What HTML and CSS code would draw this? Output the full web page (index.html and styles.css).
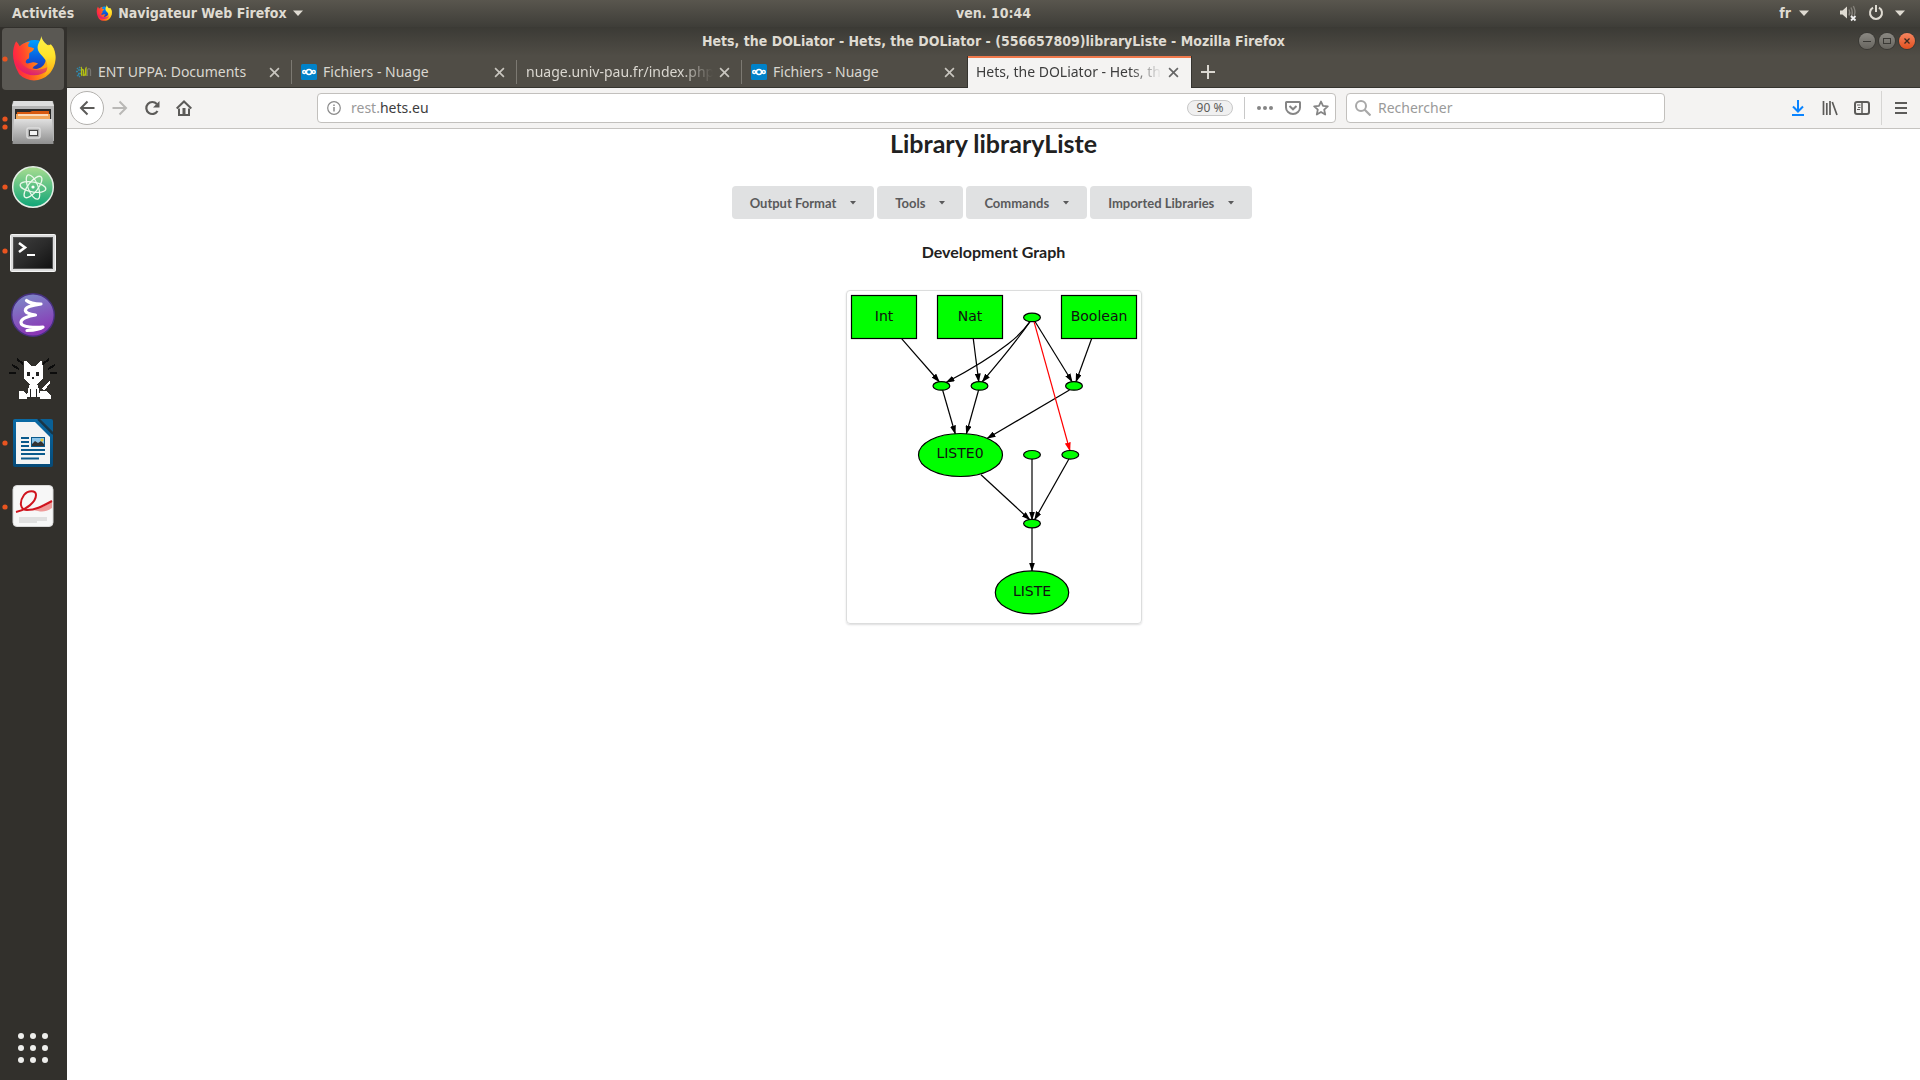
FILE: index.html
```html
<!DOCTYPE html>
<html lang="fr">
<head>
<meta charset="utf-8">
<title>Hets, the DOLiator - (556657809)libraryListe</title>
<link rel="stylesheet" href="styles.css">
</head>
<body>
<svg class="defs" width="0" height="0" aria-hidden="true">
  <defs>
    <linearGradient id="fx-body" x1="0" y1="0.6" x2="1" y2="0.4">
      <stop offset="0" stop-color="#ff1b4b"/><stop offset="0.3" stop-color="#ff4a2b"/><stop offset="0.65" stop-color="#ff9a0e"/><stop offset="1" stop-color="#ffcb1f"/>
    </linearGradient>
    <linearGradient id="fx-low" x1="0" y1="0" x2="0" y2="1">
      <stop offset="0.5" stop-color="#e0107a" stop-opacity="0"/><stop offset="1" stop-color="#d0108a" stop-opacity="0.8"/>
    </linearGradient>
    <linearGradient id="fx-tail" x1="0" y1="0" x2="0" y2="1">
      <stop offset="0" stop-color="#fff14a"/><stop offset="0.5" stop-color="#ffe32b"/><stop offset="1" stop-color="#ffa814"/>
    </linearGradient>
    <linearGradient id="fx-globe" x1="0" y1="0" x2="0" y2="1">
      <stop offset="0" stop-color="#00a0ff"/><stop offset="0.5" stop-color="#0a5bdc"/><stop offset="1" stop-color="#3a1d8a"/>
    </linearGradient>
    <linearGradient id="metal" x1="0" y1="0" x2="0" y2="1"><stop offset="0" stop-color="#e0e0e0"/><stop offset="1" stop-color="#8f8f8f"/></linearGradient>
    <linearGradient id="atom-bg" x1="0" y1="0" x2="0" y2="1"><stop offset="0" stop-color="#a9dd90"/><stop offset="1" stop-color="#0ea578"/></linearGradient>
    <linearGradient id="term-bg" x1="0" y1="0" x2="1" y2="1"><stop offset="0" stop-color="#3e3e3e"/><stop offset="0.5" stop-color="#2b2b2b"/><stop offset="1" stop-color="#111"/></linearGradient>
    <linearGradient id="emacs-bg" x1="0.3" y1="0" x2="0.6" y2="1"><stop offset="0" stop-color="#7d88c8"/><stop offset="1" stop-color="#8a31b4"/></linearGradient>
    <linearGradient id="writer-bg" x1="0" y1="0" x2="0" y2="1"><stop offset="0" stop-color="#0a6aa5"/><stop offset="1" stop-color="#064a78"/></linearGradient>
    <symbol id="firefox" viewBox="0 0 44 46">
      <circle cx="23" cy="23" r="18" fill="url(#fx-globe)"/>
      <path d="M5 6c1.500 1.500 2.500 3 3.500 5 3-3 6.500-4.500 10-4.500-1.500 2-2 3.500-1.500 5 1.500.5 3.500.5 5.500 1.500-.5 2.500-2 3.500-4.500 4.500-.5 2 0 3.500-.5 5.500-2 .5-3.500 2-3 4 1 1.500 3.500.5 6 0 2.500-.8 4.500.5 6 1-1.500 1.500-4 2-5.500 4.500 5 2 10.500-.5 12.500-6 2-6-.5-11-2.500-14 4-4 9-4 11 1 3.500 9 1 19-5 25-8 8-21 8-29 0C.5 26 .5 14 5 6z" fill="url(#fx-body)"/>
      <path d="M5 6c-4.500 8-4.500 20 3 27.500 8 8 21 8 29 0 2-2 3-4 4-6-9 9-27 10-33-4C6 19 6 12 5 6z" fill="url(#fx-low)"/>
      <path d="M29.500 1c0 4-3.500 7-3.500 11.500 0 6.500 8.500 9 9.500 16.500.5 4-1 8-4 11 9-4 13-13 11.500-21.500-.8-4-2-7-4-9.500l-2 1.500c-3.500-1.500-6.500-5.500-7.500-9.500z" fill="url(#fx-tail)"/>
    </symbol>
    <symbol id="cloud" viewBox="0 0 16 16">
      <rect width="16" height="16" rx="1.500" fill="#0082c9"/>
      <g fill="none" stroke="#fff" stroke-width="1.400"><circle cx="8" cy="8" r="2.500"/><circle cx="3.200" cy="8" r="1.500"/><circle cx="12.800" cy="8" r="1.500"/></g>
    </symbol>
    <symbol id="cross" viewBox="0 0 10 10"><path d="M1 1l8 8M9 1L1 9" fill="none" stroke="currentColor" stroke-width="1.500"/></symbol>
    <symbol id="caret" viewBox="0 0 10 6"><path d="M0 0.500h10L5 6z" fill="currentColor"/></symbol>
  </defs>
</svg>

<header class="panel">
  <div class="panel-left">
    <button class="panel-btn">Activités</button>
    <button class="panel-btn app-menu"><svg width="16" height="18"><use href="#firefox"/></svg>Navigateur Web Firefox<svg class="arrow" width="10" height="6"><use href="#caret"/></svg></button>
  </div>
  <button class="panel-btn clock">ven. 10:44</button>
  <div class="panel-right">
    <button class="panel-btn lang">fr<svg width="10" height="6"><use href="#caret"/></svg></button>
    <button class="panel-btn system" aria-label="Système">
      <svg width="18" height="18" viewBox="0 0 18 18"><path d="M1 6.500h2.500L8 2.500v12L3.500 10.500H1z" fill="currentColor"/><path d="M10 5.500q1.500 3 0 6M12 3.500q2.500 5 0 10M14.300 2q2.700 5 1 9" fill="none" stroke="#85827b" stroke-width="1.400"/><path d="M12 12l4.500 4.500m0-4.500L12 16.500" stroke="#eee" stroke-width="1.800"/></svg>
      <svg width="16" height="16" viewBox="0 0 16 16"><path d="M5 2.700a6 6 0 1 0 6 0M8 0v7" fill="none" stroke="currentColor" stroke-width="2"/></svg>
      <svg width="10" height="6"><use href="#caret"/></svg>
    </button>
  </div>
</header>

<div class="desktop">
  <nav class="dock" aria-label="Applications">
    <button class="dock-item active" aria-label="Firefox"><svg class="dock-icon" viewBox="0 0 62 62"><circle cx="3" cy="31" r="2.600" fill="#e95420"/><use href="#firefox" x="9" y="7" width="45" height="47"/></svg></button>
    <button class="dock-item" aria-label="Fichiers"><svg class="dock-icon" viewBox="0 0 62 62"><g fill="#e95420"><circle cx="3" cy="27" r="2.600"/><circle cx="3" cy="35" r="2.600"/></g>
      <path d="M11 9h40l1 5v35H10V14z" fill="#b5b5b5"/><path d="M12 9h38l2 5H10z" fill="#dedede"/><rect x="13" y="17" width="36" height="11" fill="#2a2a2a"/><path d="M15 20h13l2-1h17v8H15z" fill="#d8590f"/><path d="M14 22h34v5H14z" fill="#f2a65a"/><path d="M16 23h30" stroke="#fff" stroke-width="1.200"/><path d="M12 27h38l1.500 25h-41z" fill="url(#metal)"/><rect x="25" y="36" width="13" height="10" rx="1.500" fill="#aaa" stroke="#ddd" stroke-width="1.500"/><rect x="27.500" y="38.500" width="8" height="5" fill="#f3f3f3" stroke="#444"/></svg></button>
    <button class="dock-item" aria-label="Atom"><svg class="dock-icon" viewBox="0 0 62 62"><circle cx="3" cy="31" r="2.600" fill="#e95420"/><circle cx="31" cy="31" r="20.300" fill="url(#atom-bg)" stroke="#e4eee6" stroke-width="1.500"/><g fill="none" stroke="#eaf8ea" stroke-width="1.300"><ellipse cx="31" cy="31" rx="13" ry="5" transform="rotate(10 31 31)"/><ellipse cx="31" cy="31" rx="13" ry="5" transform="rotate(68 31 31)"/><ellipse cx="31" cy="31" rx="13" ry="5" transform="rotate(128 31 31)"/></g><circle cx="31" cy="31" r="1.600" fill="#fff"/></svg></button>
    <button class="dock-item" aria-label="Terminal"><svg class="dock-icon" viewBox="0 0 62 62"><circle cx="3" cy="31" r="2.600" fill="#e95420"/><rect x="8.500" y="14.500" width="45" height="37" rx="1" fill="#dcdcdc" stroke="#f4f4f4"/><rect x="11.500" y="17.500" width="39" height="31" fill="url(#term-bg)" stroke="#555"/><path d="M17 23l6 4.500-6 4.500" fill="none" stroke="#fff" stroke-width="2.600"/><path d="M25 35h8" stroke="#fff" stroke-width="2"/></svg></button>
    <button class="dock-item" aria-label="Emacs"><svg class="dock-icon" viewBox="0 0 62 62"><circle cx="31" cy="31" r="21.300" fill="url(#emacs-bg)" stroke="#46307f" stroke-width="1.400"/><path d="M25 46.500c6-.3 13-1 16-3.500-6 .5-22 1-22-4.500 0-4 8-6.500 14.500-7.500-6-.8-11-2.500-10-5.500 1-3.500 9-4.500 15.500-5.500-5 0-11-.3-14.500-3.500" fill="none" stroke="#fff" stroke-width="3.200" stroke-linecap="round" stroke-linejoin="round"/></svg></button>
    <button class="dock-item" aria-label="Chat"><svg class="dock-icon" viewBox="0 0 62 62" shape-rendering="crispEdges"><g stroke="#0c0c0c" stroke-width="2"><path d="M15 11l6 5M10 17l7 4M7 25h7M47 11l-6 5M53 17l-7 4M55 25h-7"/></g><g fill="#fff"><path d="M22 13h3l4 5h5l4-5h2l1 8v9l-4 4-2 2 2 5 1 8H25l1-8 2-5-3-2-3-4v-9z"/><path d="M17 43h5l3 4v4h-8zM38 43h6l5 4v4H38zM40 40l8-8v3l-6 8z"/></g><path d="M25 24h3v4h-3zM34 24h3v4h-3zM30 29h2v2h-2zM28 41h1v8h-1zM34 41h1v8h-1z" fill="#222"/></svg></button>
    <button class="dock-item" aria-label="LibreOffice Writer"><svg class="dock-icon" viewBox="0 0 62 62"><circle cx="3" cy="31" r="2.600" fill="#e95420"/><path d="M13 7h24l14 14v32a2 2 0 0 1-2 2H13a2 2 0 0 1-2-2V9a2 2 0 0 1 2-2z" fill="url(#writer-bg)"/><path d="M38 7h11a2 2 0 0 1 2 2v11z" fill="#0a6096"/><path d="M36 7l15 15" stroke="#173547" stroke-width="2"/><path d="M14 10h19l15 15v27H14z" fill="#f4f4f4"/><g stroke="#0a5a8c" stroke-width="2"><path d="M19 26h8M19 30h8M19 34h8M19 38h24M19 42h24M19 46.500h18"/></g><rect x="29.500" y="25.500" width="13" height="9" fill="#8cc4e8" stroke="#0a5a8c"/><path d="M30 34v-2l3-3 3 2 3-2 3 3v2z" fill="#333"/><circle cx="40" cy="28" r="1.500" fill="#e8c530"/></svg></button>
    <button class="dock-item" aria-label="Visionneur PDF"><svg class="dock-icon" viewBox="0 0 62 62"><circle cx="3" cy="31" r="2.600" fill="#e95420"/><rect x="11" y="9.500" width="40" height="41" rx="4" fill="#f7f7f7" stroke="#d8d8d8"/><path d="M24 33c8 1 18-1 26-8v7c-6 4-10 4-14 3-4-1-8-1-12-2z" fill="#ee9a98"/><path d="M14 36c10-2 20-10 20-17 0-5-8-5-12 0-5 7-4 15 3 15 8 0 14-3 25-9" fill="none" stroke="#d0141e" stroke-width="2"/><path d="M17 42h28M17 44h28M17 46h18" stroke="#c9c9c9" stroke-width="1"/></svg></button>
    <button class="dock-item apps" aria-label="Afficher les applications"><svg class="dock-icon" viewBox="0 0 62 62"><g fill="#eeeeec"><circle cx="19" cy="19" r="3"/><circle cx="31" cy="19" r="3"/><circle cx="43" cy="19" r="3"/><circle cx="19" cy="31" r="3"/><circle cx="31" cy="31" r="3"/><circle cx="43" cy="31" r="3"/><circle cx="19" cy="43" r="3"/><circle cx="31" cy="43" r="3"/><circle cx="43" cy="43" r="3"/></g></svg></button>
  </nav>

  <div class="window">
    <div class="titlebar">
      <span class="window-title">Hets, the DOLiator - Hets, the DOLiator - (556657809)libraryListe - Mozilla Firefox</span>
      <div class="window-controls">
        <button class="win-btn" aria-label="Réduire"><svg width="16" height="16"><path d="M4 8.500h8" stroke="#3a3935"/></svg></button>
        <button class="win-btn" aria-label="Agrandir"><svg width="16" height="16"><rect x="4.500" y="5.500" width="7" height="5" fill="none" stroke="#3a3935"/></svg></button>
        <button class="win-btn win-close" aria-label="Fermer"><svg width="16" height="16"><path d="M5.500 5.500l5 5m0-5l-5 5" stroke="#3a2a20" stroke-width="1.300"/></svg></button>
      </div>
    </div>

    <div class="tabs">
      <div class="tab">
        <svg class="favicon" width="16" height="16" viewBox="0 0 16 16"><path d="M1 4l1 1M0 7.500h2M1 12l2-1.500M3 3l1 1M2 6h3M2 9.500h3M3 13l1-1" stroke="#2f86a8" stroke-width="1.500"/><path d="M5 3c2 2-1 6 1 9M6 6c3-2 0 6 2 5.500S9 5 10 4v8" fill="none" stroke="#b5c012" stroke-width="1.300"/><path d="M11.500 12V6.500c0-2.500 3-2.500 3 0V12" fill="none" stroke="#77756f" stroke-width="1.300"/></svg>
        <button class="tab-label">ENT UPPA: Documents</button>
        <button class="tab-close" aria-label="Fermer l'onglet"><svg width="11" height="11"><use href="#cross"/></svg></button>
      </div>
      <div class="tab">
        <svg class="favicon" width="16" height="16"><use href="#cloud"/></svg>
        <button class="tab-label">Fichiers - Nuage</button>
        <button class="tab-close" aria-label="Fermer l'onglet"><svg width="11" height="11"><use href="#cross"/></svg></button>
      </div>
      <div class="tab">
        <button class="tab-label faded">nuage.univ-pau.fr/index.php</button>
        <button class="tab-close" aria-label="Fermer l'onglet"><svg width="11" height="11"><use href="#cross"/></svg></button>
      </div>
      <div class="tab before-selected">
        <svg class="favicon" width="16" height="16"><use href="#cloud"/></svg>
        <button class="tab-label">Fichiers - Nuage</button>
        <button class="tab-close" aria-label="Fermer l'onglet"><svg width="11" height="11"><use href="#cross"/></svg></button>
      </div>
      <div class="tab selected">
        <button class="tab-label faded">Hets, the DOLiator - Hets, th</button>
        <button class="tab-close" aria-label="Fermer l'onglet"><svg width="11" height="11"><use href="#cross"/></svg></button>
      </div>
      <button class="new-tab" aria-label="Nouvel onglet"><svg width="14" height="14"><path d="M7 0v14M0 7h14" stroke="currentColor" stroke-width="2"/></svg></button>
    </div>

    <div class="toolbar">
      <div class="nav-buttons">
        <button class="tool back" aria-label="Précédent"><svg width="16" height="16"><path d="M8.500 1.500L2 8l6.500 6.500M2 8h13.500" fill="none" stroke="currentColor" stroke-width="2"/></svg></button>
        <button class="tool forward" aria-label="Suivant"><svg width="16" height="16"><path d="M7.500 1.500L14 8l-6.500 6.500M14 8H.5" fill="none" stroke="currentColor" stroke-width="2"/></svg></button>
        <button class="tool" aria-label="Actualiser"><svg width="16" height="16"><path d="M12.800 4A6 6 0 1 0 13.500 11" fill="none" stroke="currentColor" stroke-width="2.200"/><path d="M15.500 1v6.500H9z" fill="currentColor"/></svg></button>
        <button class="tool" aria-label="Accueil"><svg width="16" height="16"><path d="M0.700 8.500L8 1.500l7.300 7" fill="none" stroke="currentColor" stroke-width="2"/><path d="M3 8.500V15h10V8.500" fill="none" stroke="currentColor" stroke-width="2"/><path d="M6.500 8h3v6h-3z" fill="currentColor"/></svg></button>
      </div>
      <div class="urlbar">
        <svg width="14" height="14"><circle cx="7" cy="7" r="6.300" fill="none" stroke="#8a8a8a" stroke-width="1.200"/><path d="M7 6v4.500M7 3.500V5" stroke="#8a8a8a" stroke-width="1.500"/></svg>
        <label class="subdomain" for="url">rest.</label>
        <input id="url" class="url-input" type="text" value="hets.eu">
        <button class="zoom-level">90 %</button>
        <div class="url-actions">
          <button class="tool" aria-label="Actions"><svg width="16" height="16"><g fill="#858585"><circle cx="2" cy="8" r="2"/><circle cx="8" cy="8" r="2"/><circle cx="14" cy="8" r="2"/></g></svg></button>
          <button class="tool" aria-label="Pocket"><svg width="16" height="16"><path d="M1.500 2h13c.3 0 .5.2.5.500V7.500a7 6.500 0 0 1-14 0V2.500C1 2.200 1.200 2 1.500 2z" fill="none" stroke="#858585" stroke-width="2"/><path d="M4.500 6L8 9.300 11.500 6" fill="none" stroke="#858585" stroke-width="2"/></svg></button>
          <button class="tool" aria-label="Marque-page"><svg width="16" height="16"><path d="M8 1.500l2 4.400 4.800.5-3.600 3.200 1 4.900L8 12l-4.200 2.500 1-4.900L1.200 6.400 6 5.900z" fill="none" stroke="#858585" stroke-width="1.800" stroke-linejoin="round"/></svg></button>
        </div>
      </div>
      <div class="searchbar">
        <svg width="16" height="16"><circle cx="6" cy="6" r="5" fill="none" stroke="#a8a8a8" stroke-width="2"/><path d="M9.500 9.500l6 6" stroke="#a8a8a8" stroke-width="2.200"/></svg>
        <input class="search-input" type="search" placeholder="Rechercher" aria-label="Rechercher">
      </div>
      <div class="right-buttons">
        <button class="tool download" aria-label="Téléchargements"><svg width="16" height="16"><path d="M8 0v11M3 6.500L8 11.500l5-5M2 15h12" fill="none" stroke="currentColor" stroke-width="2"/></svg></button>
        <button class="tool" aria-label="Bibliothèque"><svg width="16" height="16"><path d="M1.500 1v14M4.800 3v12M8 1v14M10.300 2l4.700 13" fill="none" stroke="currentColor" stroke-width="1.700"/></svg></button>
        <button class="tool" aria-label="Panneaux latéraux"><svg width="16" height="16"><rect x="1" y="2" width="14" height="12" rx="2" fill="none" stroke="currentColor" stroke-width="2"/><path d="M8 2v12" stroke="currentColor" stroke-width="1.500"/><path d="M3 5h3.500M4 7.500h2.500M3 9.500h3" stroke="currentColor"/></svg></button>
        <button class="tool menu" aria-label="Menu"><svg width="16" height="16"><path d="M2 3h12M2 8h12M2 13h12" stroke="currentColor" stroke-width="2"/></svg></button>
      </div>
    </div>

    <main class="page">
      <h1 class="page-title">Library libraryListe</h1>
      <div class="menus">
        <button class="menu-btn">Output Format<svg width="6" height="4"><path d="M0 0h6L3 3.500z" fill="currentColor"/></svg></button>
        <button class="menu-btn">Tools<svg width="6" height="4"><path d="M0 0h6L3 3.500z" fill="currentColor"/></svg></button>
        <button class="menu-btn">Commands<svg width="6" height="4"><path d="M0 0h6L3 3.500z" fill="currentColor"/></svg></button>
        <button class="menu-btn">Imported Libraries<svg width="6" height="4"><path d="M0 0h6L3 3.500z" fill="currentColor"/></svg></button>
      </div>
      <h3 class="section-title">Development Graph</h3>
      <div class="graph">
        <svg class="graph-svg" width="294" height="332" viewBox="7 6 294 332">
          <defs>
            <marker id="head" markerUnits="userSpaceOnUse" markerWidth="9" markerHeight="6" refX="8.500" refY="3" orient="auto"><path d="M0 0l9 3-9 3z"/></marker>
            <marker id="head-red" markerUnits="userSpaceOnUse" markerWidth="9" markerHeight="6" refX="8.500" refY="3" orient="auto"><path d="M0 0l9 3-9 3z" fill="red"/></marker>
          </defs>
          <g class="edges">
            <path d="M61.800 53.800L99.500 97"/>
            <path d="M133.300 53.800L138.800 97"/>
            <path d="M190 36.700C184 45 176 53 168 59C150 73 128 86 106 97.500"/>
            <path d="M190 36.700C178 54 160 76 142 97"/>
            <path d="M195 36.500L232.300 97"/>
            <path d="M251.600 53.800L235.900 97"/>
            <path d="M229.500 105L147 153.500"/>
            <path d="M102.600 105L115.300 149"/>
            <path d="M138.600 105L126.300 149"/>
            <path d="M141 189.800L190 235"/>
            <path d="M192 174V235"/>
            <path d="M228.900 174L194.500 235"/>
            <path d="M192 243V286"/>
            <path class="red" d="M194 36.700L230 166"/>
          </g>
          <g class="nodes">
            <rect x="11.500" y="10.500" width="65" height="43"/>
            <rect x="97.500" y="10.500" width="65" height="43"/>
            <rect x="221.500" y="10.500" width="75" height="43"/>
            <ellipse cx="192" cy="32.400" rx="8.400" ry="4.300"/>
            <ellipse cx="101.400" cy="100.900" rx="8.400" ry="4.300"/>
            <ellipse cx="139.500" cy="100.900" rx="8.400" ry="4.300"/>
            <ellipse cx="234" cy="100.900" rx="8.400" ry="4.300"/>
            <ellipse cx="192" cy="169.800" rx="8.400" ry="4.300"/>
            <ellipse cx="230.300" cy="169.800" rx="8.400" ry="4.300"/>
            <ellipse cx="192" cy="238.600" rx="8.400" ry="4.300"/>
            <ellipse cx="120.500" cy="170" rx="42" ry="21.500"/>
            <ellipse cx="192" cy="307.400" rx="36.700" ry="21.500"/>
          </g>
          <g class="node-labels">
            <text x="44" y="36">Int</text>
            <text x="130" y="36">Nat</text>
            <text x="259" y="36">Boolean</text>
            <text x="120" y="173">LISTE0</text>
            <text x="192" y="311">LISTE</text>
          </g>
        </svg>
      </div>
    </main>
  </div>
</div>
</body>
</html>
```
FILE: styles.css
```css
* { box-sizing: border-box; }
html, body { height: 100%; margin: 0; }
body {
  display: flex;
  flex-direction: column;
  min-height: 100vh;
  font: 14px/20px "Noto Sans", sans-serif;
  color: #3d3d3d;
  background: #fff;
}
button {
  margin: 0;
  padding: 0;
  border: 0;
  background: none;
  color: inherit;
  font: inherit;
  cursor: pointer;
}
svg { display: block; flex: none; }
.defs { position: absolute; }

/* top panel */
.panel {
  display: grid;
  grid-template-columns: 67px minmax(0, 1fr) auto minmax(0, 1fr);
  align-items: center;
  height: 27px;
  padding-bottom: 1px;
  background: linear-gradient(#59564e, #3e3d38);
  color: #dfdbd2;
  font: bold 14px/20px "DejaVu Sans Condensed", "DejaVu Sans", sans-serif;
}
.panel-left { grid-column: 1 / 3; display: flex; gap: 22px; padding-left: 12px; }
.panel-btn { display: flex; align-items: center; gap: 6px; white-space: nowrap; }
.panel-right { display: flex; justify-content: flex-end; gap: 30px; padding-right: 15px; }
.lang { gap: 8px; }
.system { gap: 11px; }

.desktop { flex: 1; display: flex; min-height: 0; }

/* dock */
.dock {
  display: flex;
  flex-direction: column;
  gap: 2px;
  flex: none;
  width: 67px;
  padding: 1px 0 1px 2px;
  background: #32302c;
}
.dock-item { width: 62px; height: 62px; border-radius: 4px; }
.dock-item.active { background: #5a5853; }
.dock-icon { width: 62px; height: 62px; }
.apps { margin-top: auto; }

/* browser window */
.window { flex: 1; display: flex; flex-direction: column; min-width: 0; }
.titlebar {
  display: grid;
  grid-template-columns: minmax(0, 1fr) auto minmax(0, 1fr);
  align-items: center;
  height: 29px;
  padding-bottom: 1px;
  background: linear-gradient(#3b3a35, #504d46);
  color: #dfdbd2;
  font: bold 14px/20px "DejaVu Sans Condensed", "DejaVu Sans", sans-serif;
}
.window-title { grid-column: 2; }
.window-controls { display: flex; justify-content: flex-end; gap: 4px; padding-right: 5px; }
.win-btn {
  width: 16px;
  height: 16px;
  border-radius: 50%;
  background: linear-gradient(#8b8983, #67655f);
  box-shadow: 0 0 0 1px #3a3935;
}
.win-close { background: linear-gradient(#f58560, #e2501f); }

.tabs {
  display: flex;
  height: 32px;
  background: #504d46;
  color: #dad7d0;
  box-shadow: inset 0 -1px #35342f;
}
.tab {
  position: relative;
  display: flex;
  align-items: center;
  gap: 6px;
  flex: 0 1 225px;
  min-width: 0;
  padding: 0 12px 0 9px;
}
.tab:not(.selected):not(.before-selected)::after {
  content: "";
  position: absolute;
  right: 0;
  top: 4px;
  bottom: 4px;
  width: 1px;
  background: #7c7972;
}
.tab-label {
  flex: 1;
  min-width: 0;
  overflow: hidden;
  text-align: left;
  white-space: nowrap;
}
.faded { mask-image: linear-gradient(90deg, #000 calc(100% - 32px), transparent); }
.tab-close { width: 11px; height: 11px; color: #c9c6bf; }
.selected {
  padding-left: 8px;
  background: #f4f3f2;
  color: #3d3d3d;
  border: 1px solid #35342f;
  border-width: 0 1px;
  box-shadow: inset 0 2px #f0794c;
}
.selected .tab-close { color: #666; }
.new-tab { padding: 0 9px; color: #dad7d0; }

.toolbar {
  display: flex;
  align-items: center;
  height: 41px;
  background: #f4f3f2;
  border-bottom: 1px solid #c5c3c0;
  color: #5c5b59;
}
.nav-buttons {
  display: flex;
  align-items: center;
  gap: 16px;
  flex: 125 0 auto;
  padding-left: 3px;
}
.back {
  display: grid;
  place-items: center;
  width: 34px;
  height: 34px;
  margin-right: -8px;
  border: 1px solid #b3b1ae;
  border-radius: 50%;
  background: #fff;
}
.forward { color: #b9b8b6; }
.urlbar, .searchbar {
  display: flex;
  align-items: center;
  height: 30px;
  min-width: 0;
  border: 1px solid #c2c0bd;
  border-radius: 4px;
  background: #fff;
}
.urlbar { flex: 1002 1 0; padding: 0 6px 0 9px; }
.subdomain { padding-left: 10px; color: #9a9a9a; }
.url-input, .search-input {
  flex: 1;
  min-width: 0;
  padding: 0;
  border: 0;
  outline: 0;
  background: none;
  color: #3d3d3d;
  font: inherit;
}
.search-input::placeholder { color: #9a9a9a; opacity: 1; }
.zoom-level {
  width: 46px;
  height: 16px;
  margin-right: 11px;
  border: 1px solid #c8c8c8;
  border-radius: 8px;
  background: #f0f0f0;
  font-size: 12px;
  line-height: 14px;
}
.url-actions {
  display: flex;
  align-items: center;
  gap: 12px;
  height: 22px;
  padding-left: 12px;
  border-left: 1px solid #c8c8c8;
}
.searchbar { flex: 301 1 0; gap: 7px; margin-left: 10px; padding: 0 8px; }
.right-buttons {
  display: flex;
  align-items: center;
  justify-content: flex-end;
  gap: 16px;
  flex: 125 0 auto;
  padding-right: 11px;
}
.download { color: #0a84ff; }
.menu {
  display: grid;
  place-items: center;
  height: 34px;
  margin-left: -5px;
  padding-left: 11px;
  border-left: 1px solid #d6d5d3;
}

/* page */
.page {
  flex: 1;
  display: flex;
  flex-direction: column;
  align-items: center;
  background: #fff;
  color: #212121;
  font-family: Lato, sans-serif;
}
.page-title { margin: 0 0 29px; font-size: 25px; line-height: 28px; }
.menus { display: flex; gap: 3px; margin-right: 3px; }
.menu-btn {
  display: flex;
  align-items: center;
  gap: 14px;
  height: 33px;
  padding: 0 18px;
  border-radius: 4px;
  background: #e0e1e2;
  color: #5a5a5b;
  font-size: 13px;
  font-weight: bold;
}
.section-title { margin: 23px 0 28px; font-size: 16px; line-height: 20px; }
.graph {
  border: 1px solid #dcdddd;
  border-radius: 4px;
  box-shadow: 0 1px 2px rgba(34, 36, 38, 0.15);
}
.edges { fill: none; stroke: #000; stroke-width: 1.2; }
.edges path { marker-end: url(#head); }
.edges .red { stroke: red; marker-end: url(#head-red); }
.nodes { fill: #0f0; stroke: #000; stroke-width: 1.2; }
.node-labels { font: 14px "DejaVu Sans", sans-serif; fill: #111; text-anchor: middle; }
```
